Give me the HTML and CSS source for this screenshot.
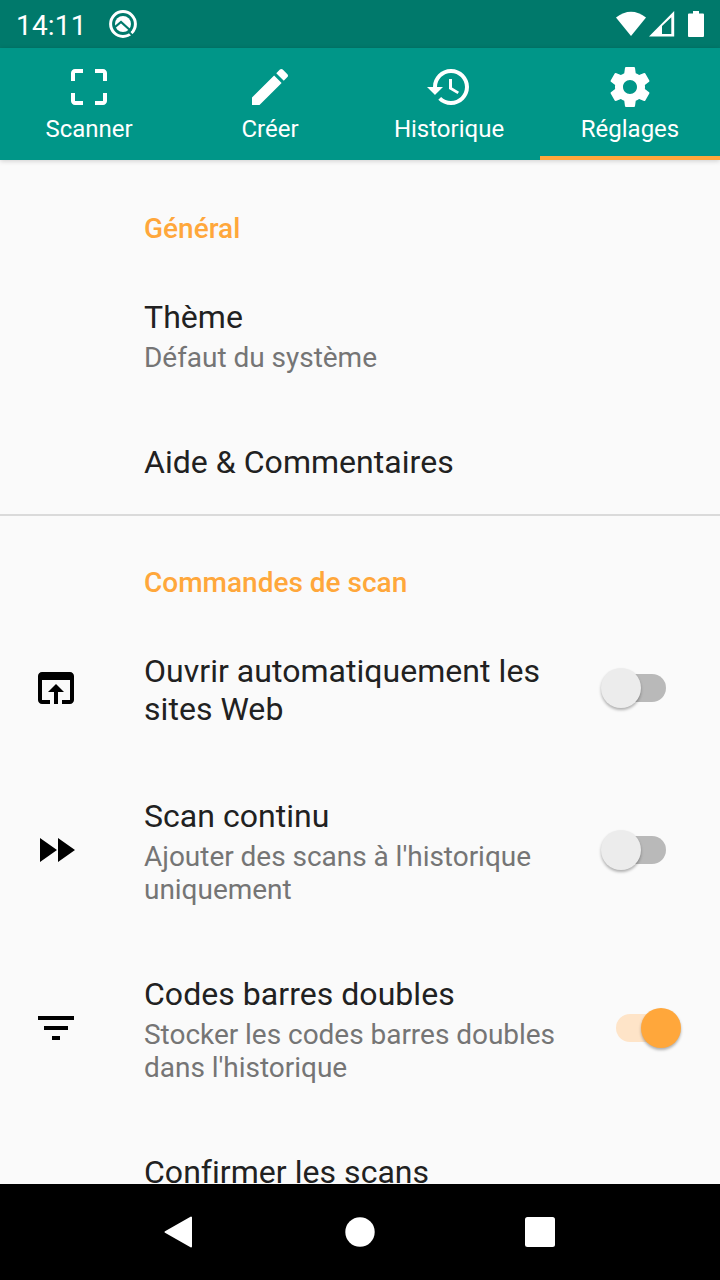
FILE: index.html
```html
<!DOCTYPE html>
<html lang="fr">
<head>
  <meta charset="UTF-8">
  <title>Réglages</title>
  <link rel="stylesheet" href="styles.css">
</head>
<body>

  <div class="screen">
    <div class="status-bar">
      <span class="clock">14:11</span>
      <svg class="status-logo" viewBox="0 0 28 28">
        <circle cx="14" cy="14" r="12.400" fill="none" stroke="#fff" stroke-width="3"/>
        <circle cx="14" cy="14" r="8" fill="#fff"/>
        <path d="M5.500 17.500l6.500-5.500 10 9" fill="none" stroke="#00796b" stroke-width="2.200"/>
        <path d="M19.500 21.500l5 5" stroke="#00796b" stroke-width="1.800"/>
      </svg>
      <div class="status-icons">
        <svg width="30" height="26" viewBox="0 0 30 26"><path d="M0 6.500Q15-5 30 6.500L15 25z" fill="#fff"/></svg>
        <svg width="26" height="26" viewBox="0 0 26 26"><path fill-rule="evenodd" d="M0 25.500L25.200 0v25.500zM13 15v8h9.300V6.300z" fill="#fff"/></svg>
        <svg class="battery" width="16" height="26" viewBox="0 0 16 26"><path d="M5 0h6v2.500h4q1 0 1 1V25q0 1-1 1H1q-1 0-1-1V3.500q0-1 1-1h4z" fill="#fff"/></svg>
      </div>
    </div>

    <div class="tabs">
      <div class="tab">
        <svg class="icon" viewBox="0 0 24 24"><path d="M3 5v4h2V5h4V3H5c-1.100 0-2 .9-2 2zm2 10H3v4c0 1.100.9 2 2 2h4v-2H5v-4zm14 4h-4v2h4c1.100 0 2-.9 2-2v-4h-2v4zm0-16h-4v2h4v4h2V5c0-1.100-.9-2-2-2z"/></svg>
        <span>Scanner</span>
      </div>
      <div class="tab centered">
        <svg class="icon" viewBox="0 0 24 24"><path d="M3 17.250V21h3.750L17.810 9.940l-3.750-3.750L3 17.250zM20.710 7.040c.39-.39.39-1.020 0-1.410l-2.340-2.340c-.39-.39-1.020-.39-1.410 0l-1.830 1.830 3.750 3.750 1.830-1.830z"/></svg>
        <span>Créer</span>
      </div>
      <div class="tab">
        <svg class="icon" viewBox="0 0 24 24"><path d="M13 3c-4.970 0-9 4.030-9 9H1l3.890 3.890.07.14L9 12H6c0-3.870 3.130-7 7-7s7 3.130 7 7-3.130 7-7 7c-1.930 0-3.680-.79-4.940-2.060l-1.420 1.420C8.270 19.990 10.510 21 13 21c4.970 0 9-4.030 9-9s-4.030-9-9-9zm-1 5v5l4.280 2.540.72-1.210-3.500-2.080V8H12z"/></svg>
        <span>Historique</span>
      </div>
      <div class="tab centered active">
        <svg class="icon" viewBox="0 0 24 24"><path d="M19.430 12.980c.04-.32.07-.64.07-.98s-.03-.66-.07-.98l2.110-1.650c.19-.15.24-.42.12-.64l-2-3.460c-.12-.22-.39-.3-.61-.22l-2.490 1c-.52-.4-1.080-.73-1.690-.98l-.38-2.650C14.460 2.180 14.250 2 14 2h-4c-.25 0-.46.18-.49.42l-.38 2.650c-.61.25-1.170.59-1.690.98l-2.490-1c-.23-.09-.49 0-.61.22l-2 3.460c-.13.22-.07.49.12.64l2.110 1.650c-.04.32-.07.65-.07.98s.03.66.07.98l-2.110 1.650c-.19.15-.24.42-.12.64l2 3.460c.12.22.39.3.61.22l2.490-1c.52.4 1.080.73 1.690.98l.38 2.650c.03.24.24.42.49.42h4c.25 0 .46-.18.49-.42l.38-2.650c.61-.25 1.170-.59 1.690-.98l2.490 1c.23.09.49 0 .61-.22l2-3.460c.12-.22.07-.49-.12-.64l-2.110-1.650zM12 15.500c-1.930 0-3.500-1.570-3.500-3.500s1.570-3.500 3.500-3.500 3.500 1.570 3.500 3.500-1.570 3.500-3.500 3.500z"/></svg>
        <span>Réglages</span>
      </div>
    </div>

    <div class="settings">
      <div class="category">Général</div>
      <div class="row">
        <div class="text">
          <div class="title">Thème</div>
          <div class="summary">Défaut du système</div>
        </div>
      </div>
      <div class="row">
        <div class="text">
          <div class="title">Aide &amp; Commentaires</div>
        </div>
      </div>

      <div class="category divider">Commandes de scan</div>
      <div class="row">
        <svg class="icon" viewBox="0 0 24 24"><path d="M19 4H5c-1.110 0-2 .9-2 2v12c0 1.100.89 2 2 2h4v-2H5V8h14v10h-4v2h4c1.100 0 2-.9 2-2V6c0-1.100-.89-2-2-2zm-7 6l-4 4h3v6h2v-6h3l-4-4z"/></svg>
        <div class="text">
          <div class="title">Ouvrir automatiquement les sites Web</div>
        </div>
        <div class="switch"><div class="thumb"></div></div>
      </div>
      <div class="row tall">
        <svg class="icon" viewBox="0 0 24 24"><path d="M4 18l8.500-6L4 6v12zm9-12v12l8.500-6L13 6z"/></svg>
        <div class="text">
          <div class="title">Scan continu</div>
          <div class="summary">Ajouter des scans à l'historique uniquement</div>
        </div>
        <div class="switch"><div class="thumb"></div></div>
      </div>
      <div class="row tall">
        <svg class="icon" viewBox="0 0 24 24"><path d="M10 18h4v-2h-4v2zM3 6v2h18V6H3zm3 7h12v-2H6v2z"/></svg>
        <div class="text">
          <div class="title">Codes barres doubles</div>
          <div class="summary">Stocker les codes barres doubles dans l'historique</div>
        </div>
        <div class="switch on"><div class="thumb"></div></div>
      </div>
      <div class="row tall">
        <div class="text">
          <div class="title">Confirmer les scans</div>
        </div>
      </div>
    </div>

    <div class="nav-bar">
      <svg viewBox="0 0 32 36"><path d="M27 3.500v29L1.500 18z" fill="#fff" stroke="#fff" stroke-width="2" stroke-linejoin="round"/></svg>
      <svg viewBox="0 0 32 36"><circle cx="16" cy="18" r="14.700" fill="#fff"/></svg>
      <svg viewBox="0 0 32 36"><rect x="1" y="3" width="30" height="30" rx="2.500" fill="#fff"/></svg>
    </div>
  </div>

</body>
</html>
```
FILE: styles.css
```css
* {
  box-sizing: border-box;
}

body {
  margin: 0;
  font-family: Roboto, sans-serif;
  background: #fafafa;
}

.screen {
  display: flex;
  flex-direction: column;
  width: 720px;
  height: 1280px;
  overflow: hidden;
}

/* Status bar */
.status-bar {
  display: flex;
  align-items: center;
  height: 48px;
  padding: 0 16px;
  background: #00796b;
  color: white;
}

.clock {
  width: 93px;
  font-size: 28px;
  line-height: 46px;
  padding-top: 3px;
  letter-spacing: 0.2px;
}

.status-logo {
  width: 28px;
  height: 28px;
}

.status-icons {
  display: flex;
  margin-left: auto;
  gap: 3px;
}

.battery {
  margin-left: 10px;
}

/* Tabs */
.tabs {
  display: flex;
  flex-shrink: 0;
  height: 112px;
  background: #009688;
  color: white;
  box-shadow: 0 1px 5px rgba(0, 0, 0, 0.18);
  z-index: 1;
}

.tab {
  width: 180px;
  padding: 15px 2px 0 0;
  display: flex;
  flex-direction: column;
  align-items: center;
  font-size: 24px;
  line-height: 28px;
  border-bottom: 4px solid transparent;
}

.tab.centered {
  padding-right: 0;
}

.tab.active {
  border-bottom-color: #ffa73b;
}

.icon {
  width: 48px;
  height: 48px;
  flex-shrink: 0;
  fill: currentColor;
}

.tab span {
  margin-top: 4px;
}

/* Settings list */
.settings {
  flex: 1;
  min-height: 0;
  overflow: hidden;
  color: #212121;
}

.category {
  height: 101px;
  padding: 52px 0 0 144px;
  font-size: 28px;
  line-height: 33px;
  font-weight: 500;
  color: #ffa73b;
}

.divider {
  border-top: 2px solid #dadada;
  padding-top: 50px;
}

.row {
  display: flex;
  align-items: center;
  padding: 0 38px 0 32px;
}

.row .icon {
  color: black;
}

.text {
  width: 424px;
  padding: 37px 0 33px;
  margin-left: 112px;
}

.icon + .text {
  margin-left: 64px;
}

.title {
  font-size: 32px;
  line-height: 38px;
  letter-spacing: 0.04px;
}

.summary {
  margin-top: 5px;
  margin-bottom: -1px;
  font-size: 28px;
  line-height: 33px;
  letter-spacing: -0.03px;
  color: #757575;
}

.tall .text {
  padding-top: 36px;
}

.tall .summary {
  margin-bottom: 0;
}

.switch {
  display: flex;
  align-items: center;
  width: 50px;
  height: 28px;
  margin-left: 48px;
  border-radius: 14px;
  background: #b9b9b9;
}

.thumb {
  width: 40px;
  height: 40px;
  flex-shrink: 0;
  margin-left: -15px;
  border-radius: 50%;
  background: #ececec;
  box-shadow: 0 2px 3px rgba(0, 0, 0, 0.3);
}

.switch.on {
  background: #fee4c8;
}

.switch.on .thumb {
  margin-left: 25px;
  background: #ffa73b;
}

/* Navigation bar */
.nav-bar {
  display: flex;
  justify-content: center;
  align-items: center;
  gap: 148px;
  height: 96px;
  background: black;
}

.nav-bar svg {
  width: 32px;
  height: 36px;
}
```
